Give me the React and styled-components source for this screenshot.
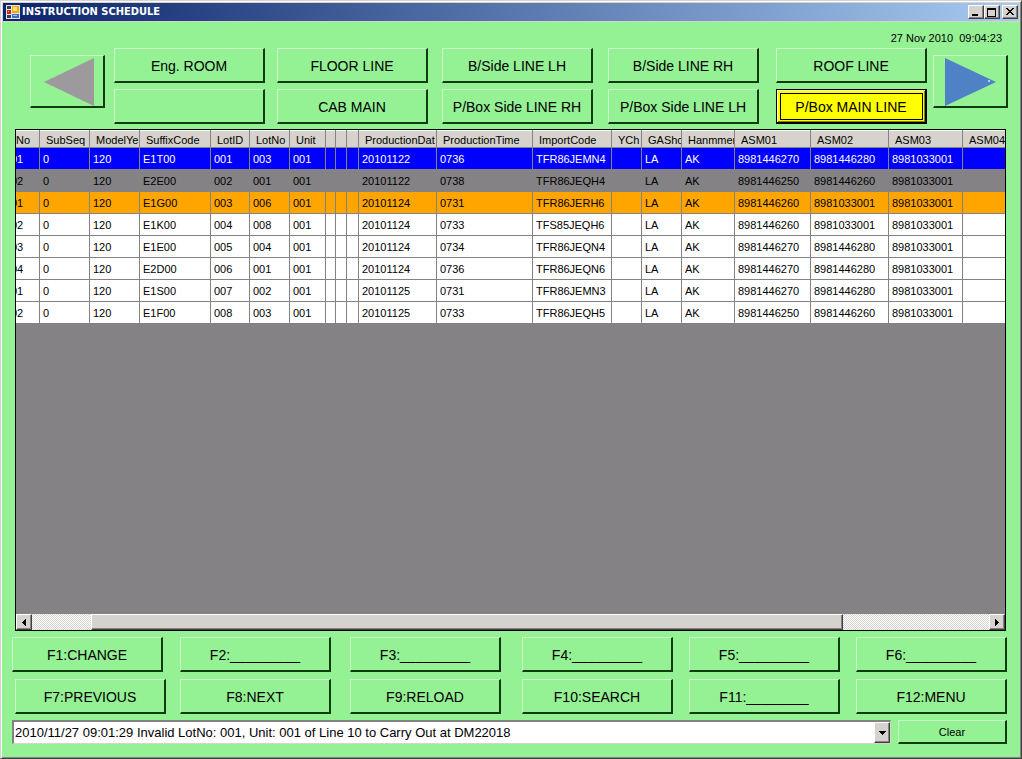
import React from "react";
import styled, { createGlobalStyle, css } from "styled-components";

const green = "#94f194";
const face = "#d6d3ce";
const grey = "#848284";

const GlobalStyle = createGlobalStyle`
  *, *::before, *::after { box-sizing: border-box; }
  body {
    margin: 0;
    background: ${face};
    color: #000;
    font: 11px/14px "Liberation Sans", Arial, sans-serif;
  }
  button, select { margin: 0; padding: 0; color: inherit; font: inherit; border-radius: 0; }
`;

const Window = styled.div`
  display: flex;
  flex-direction: column;
  min-height: 100vh;
  padding: 1px;
  background: ${face};
  border: 1px solid;
  border-color: ${face} #424142 #424142 ${face};
  box-shadow: inset 1px 1px 0 #fff, inset -1px -1px 0 ${grey};
`;

const TitleBar = styled.header`
  display: flex;
  align-items: center;
  height: 18px;
  margin: 1px 1px 1px;
  padding: 0 1px 0 3px;
  background: linear-gradient(90deg, #0a246a, #a6caf0);
`;

const Title = styled.h1`
  flex: 1;
  margin: 0 0 0 2px;
  color: #fff;
  font: bold 11px/16px "DejaVu Sans Condensed", "DejaVu Sans", sans-serif;
`;

const raised = css`
  border: 1px solid;
  border-color: #fff #424142 #424142 #fff;
  box-shadow: inset -1px -1px 0 ${grey};
  background: ${face};
`;

const CaptionButton = styled.button`
  ${raised}
  display: grid;
  place-items: center;
  width: 16px;
  height: 14px;
  margin-left: ${(p) => (p.$apart ? 2 : 0)}px;
`;

const Body = styled.main`
  flex: 1;
  display: flex;
  flex-direction: column;
  padding: 9px 12px 13px 10px;
  background: ${green};
`;

const Clock = styled.time`
  align-self: flex-end;
  margin-right: 6px;
  white-space: pre;
`;

const Navigation = styled.nav`
  display: flex;
  align-items: flex-start;
  gap: 6px;
  margin: 3px 0 5px 18px;
`;

const flatRaised = css`
  background: ${green};
  border: solid;
  border-width: 1px 2px 2px 1px;
  border-color: #c8ffc8 #103c10 #103c10 #c8ffc8;
`;

const ArrowButton = styled.button`
  ${flatRaised}
  display: grid;
  place-items: center;
  flex: none;
  width: 75px;
  height: 53px;
  margin-top: 7px;
`;

const ButtonGrid = styled.div`
  display: grid;
  flex: 1;
  grid-template-columns: ${(p) => p.$columns};
  row-gap: 6px;
  margin-left: ${(p) => p.$indent || 0}px;
`;

const PanelButton = styled.button`
  ${flatRaised}
  width: 151px;
  height: 35px;
  padding-top: 2px;
  font-size: 14px;
  line-height: 18px;
  white-space: nowrap;
  ${(p) =>
    p.$active &&
    css`
      background: #ff0;
      border: 1px solid #000;
      border-width: 1px 2px 2px 1px;
      box-shadow: inset 1px 1px 0 #ffffb0, inset -1px -1px 0 #848200;
      outline: 1px solid #000;
      outline-offset: -5px;
    `}
`;

const Grid = styled.section`
  display: flex;
  flex-direction: column;
  flex: 1;
  margin: 0 2px 6px 3px;
  overflow: hidden;
  background: ${grey};
  border: 1px solid #000;
`;

const Table = styled.table`
  width: 100%;
  table-layout: fixed;
  border-collapse: separate;
  border-spacing: 0;
`;

const Col = styled.col`
  width: ${(p) => (p.$width ? `${p.$width}px` : "auto")};
`;

const HeadCell = styled.th`
  height: 18px;
  padding: 2px 0 0 ${(p) => (p.$clipped ? 0 : 6)}px;
  background: ${face};
  border-right: 1px solid ${grey};
  border-bottom: 1px solid ${grey};
  box-shadow: inset 0 1px 0 #fff;
  font-weight: normal;
  text-align: left;
  &:last-child { border-right: 0; }
`;

const Cell = styled.td`
  height: 22px;
  padding: 0 0 0 ${(p) => (p.$clipped ? 0 : 3)}px;
  border-right: 1px solid ${grey};
  border-bottom: 1px solid ${grey};
  text-indent: ${(p) => (p.$clipped ? -5 : 0)}px;
  &:last-child { border-right: 0; }
`;

const CellText = styled.span`
  display: block;
  overflow: hidden;
  white-space: nowrap;
`;

const tones = {
  current: ["#00f", "#fff"],
  done: [grey, "#000"],
  next: ["#ffa500", "#000"],
  plain: ["#fff", "#000"],
};

const Row = styled.tr`
  background: ${(p) => tones[p.$tone][0]};
  color: ${(p) => tones[p.$tone][1]};
`;

const ScrollBar = styled.div`
  display: flex;
  height: 16px;
  margin-top: auto;
  background: repeating-conic-gradient(#fff 0 25%, ${face} 0 50%) 0 0 / 2px 2px;
`;

const ScrollButton = styled.button`
  ${raised}
  display: grid;
  place-items: center;
  flex: none;
  width: 16px;
`;

const ScrollSpace = styled.div`
  flex: ${(p) => p.$share} 0 0;
`;

const ScrollThumb = styled.div`
  ${raised}
  flex: 752 0 0;
`;

const FunctionKeys = styled.div`
  display: flex;
  flex-direction: column;
  gap: 7px;
  margin-right: 1px;
`;

const StatusRow = styled.div`
  display: flex;
  gap: 7px;
  margin: 6px 1px 0 0;
`;

const StatusField = styled.div`
  position: relative;
  flex: 1;
  height: 24px;
`;

const StatusSelect = styled.select`
  appearance: none;
  width: 100%;
  height: 24px;
  padding: 0 20px 0 1px;
  background: #fff;
  border: solid;
  border-width: 2px 1px 1px 2px;
  border-color: ${grey} ${face} ${face} ${grey};
  font-size: 13px;
  line-height: 20px;
`;

const DropMark = styled.span`
  ${raised}
  position: absolute;
  top: 2px;
  right: 1px;
  bottom: 1px;
  display: grid;
  place-items: center;
  width: 16px;
  pointer-events: none;
`;

const ClearButton = styled.button`
  ${flatRaised}
  width: 109px;
  height: 24px;
`;

const lines = [
  "Eng. ROOM", "FLOOR LINE", "B/Side LINE LH", "B/Side LINE RH", "ROOF LINE",
  "", "CAB MAIN", "P/Box Side LINE RH", "P/Box Side LINE LH", "P/Box MAIN LINE",
];

const columns = [
  ["No", 24], ["SubSeq", 50], ["ModelYe", 50], ["SuffixCode", 71], ["LotID", 39],
  ["LotNo", 40], ["Unit", 36], ["", 10], ["", 11], ["", 12], ["ProductionDat", 78],
  ["ProductionTime", 96], ["ImportCode", 79], ["YCh", 30], ["GASho", 40],
  ["Hanmmer", 53], ["ASM01", 76], ["ASM02", 78], ["ASM03", 74], ["ASM04", 0],
];

const order = (no, suffix, id, lot, date, time, code, asm1, asm2) => [
  no, "0", "120", suffix, id, lot, "001", "", "", "", date, time, code, "",
  "LA", "AK", asm1, asm2, "8981033001", "",
];

const rows = [
  ["current", order("01", "E1T00", "001", "003", "20101122", "0736", "TFR86JEMN4", "8981446270", "8981446280")],
  ["done", order("02", "E2E00", "002", "001", "20101122", "0738", "TFR86JEQH4", "8981446250", "8981446260")],
  ["next", order("01", "E1G00", "003", "006", "20101124", "0731", "TFR86JERH6", "8981446260", "8981033001")],
  ["plain", order("02", "E1K00", "004", "008", "20101124", "0733", "TFS85JEQH6", "8981446260", "8981033001")],
  ["plain", order("03", "E1E00", "005", "004", "20101124", "0734", "TFR86JEQN4", "8981446270", "8981446280")],
  ["plain", order("04", "E2D00", "006", "001", "20101124", "0736", "TFR86JEQN6", "8981446270", "8981446280")],
  ["plain", order("01", "E1S00", "007", "002", "20101125", "0731", "TFR86JEMN3", "8981446270", "8981446280")],
  ["plain", order("02", "E1F00", "008", "003", "20101125", "0733", "TFR86JEQH5", "8981446250", "8981446260")],
];

const keysTop = ["F1:CHANGE", "F2:_________", "F3:_________", "F4:_________", "F5:_________", "F6:_________"];
const keysBottom = ["F7:PREVIOUS", "F8:NEXT", "F9:RELOAD", "F10:SEARCH", "F11:________", "F12:MENU"];

function FormIcon() {
  return (
    <svg width="14" height="14" viewBox="0 0 14 14" aria-hidden="true">
      <rect width="14" height="14" fill="#e8e4d8" />
      <rect x="1" y="1" width="4" height="3" fill="#3c3c50" />
      <rect x="1" y="5" width="4" height="4" fill="#c42c20" />
      <rect x="2" y="6" width="1" height="1" fill="#ff9a88" />
      <rect x="1" y="10" width="4" height="3" fill="#3c3c50" />
      <rect x="6" y="1" width="7" height="7" fill="#e8a820" />
      <rect x="7" y="2" width="4" height="4" fill="#ffe070" />
      <rect x="6" y="9" width="7" height="4" fill="#3c6cc8" />
      <rect x="7" y="10" width="4" height="1" fill="#a0c4ff" />
    </svg>
  );
}

function Triangle({ points, width, height }) {
  return (
    <svg width={width} height={height} viewBox={`0 0 ${width} ${height}`} shapeRendering="crispEdges" aria-hidden="true">
      <polygon points={points} fill="#000" />
    </svg>
  );
}

export default function App() {
  return (
    <Window>
      <GlobalStyle />
      <TitleBar>
        <FormIcon />
        <Title>INSTRUCTION SCHEDULE</Title>
        <CaptionButton aria-label="Minimize">
          <svg width="10" height="9" shapeRendering="crispEdges"><rect x="1" y="6" width="6" height="2" /></svg>
        </CaptionButton>
        <CaptionButton aria-label="Maximize">
          <svg width="10" height="9" shapeRendering="crispEdges">
            <path d="M0 0h9v9h-9zM1 2v6h7v-6z" fillRule="evenodd" />
          </svg>
        </CaptionButton>
        <CaptionButton aria-label="Close" $apart>
          <svg width="10" height="8" shapeRendering="crispEdges">
            <path d="M1 0h2v1h1v1h2v-1h1v-1h2v1h-1v1h-1v1h-1v1h1v1h1v1h1v1h-2v-1h-1v-1h-2v1h-1v1h-2v-1h1v-1h1v-1h1v-1h-1v-1h-1v-1h-1z" />
          </svg>
        </CaptionButton>
      </TitleBar>
      <Body>
        <Clock dateTime="2010-11-27T09:04:23">27 Nov 2010  09:04:23</Clock>
        <Navigation aria-label="Lines">
          <ArrowButton aria-label="Previous lines">
            <svg width="72" height="50" aria-hidden="true"><path d="M13 26L63 2V50Z" fill="#9c9a9c" /></svg>
          </ArrowButton>
          <ButtonGrid $columns="163fr 165fr 166fr 168fr 151fr" $indent={3}>
            {lines.map((name, i) => (
              <PanelButton key={i} $active={i === 9} aria-label={name || "Unassigned line"}>{name}</PanelButton>
            ))}
          </ButtonGrid>
          <ArrowButton aria-label="Next lines">
            <svg width="72" height="50" aria-hidden="true">
              <path d="M11 2L62 26L11 50Z" fill="#4f81c7" />
              <rect x="54" y="24" width="2" height="2" fill="#b8d0f0" />
            </svg>
          </ArrowButton>
        </Navigation>
        <Grid>
          <Table>
            <colgroup>{columns.map(([, width], i) => <Col key={i} $width={width} />)}</colgroup>
            <thead>
              <tr>
                {columns.map(([name], i) => (
                  <HeadCell key={i} scope="col" $clipped={i === 0}><CellText>{name}</CellText></HeadCell>
                ))}
              </tr>
            </thead>
            <tbody>
              {rows.map(([tone, cells], r) => (
                <Row key={r} $tone={tone}>
                  {cells.map((text, i) => (
                    <Cell key={i} $clipped={i === 0}><CellText>{text}</CellText></Cell>
                  ))}
                </Row>
              ))}
            </tbody>
          </Table>
          <ScrollBar>
            <ScrollButton aria-label="Scroll left"><Triangle points="4,0 4,7 0,3.5" width={4} height={7} /></ScrollButton>
            <ScrollSpace $share={59} />
            <ScrollThumb />
            <ScrollSpace $share={146} />
            <ScrollButton aria-label="Scroll right"><Triangle points="0,0 0,7 4,3.5" width={4} height={7} /></ScrollButton>
          </ScrollBar>
        </Grid>
        <FunctionKeys>
          <ButtonGrid $columns="168fr 170fr 172fr 167fr 167fr 151fr">
            {keysTop.map((name) => <PanelButton key={name}>{name}</PanelButton>)}
          </ButtonGrid>
          <ButtonGrid $columns="165fr 170fr 172fr 167fr 167fr 151fr" $indent={3}>
            {keysBottom.map((name) => <PanelButton key={name}>{name}</PanelButton>)}
          </ButtonGrid>
        </FunctionKeys>
        <StatusRow>
          <StatusField>
            <StatusSelect aria-label="Messages">
              <option>2010/11/27 09:01:29 Invalid LotNo: 001, Unit: 001 of Line 10 to Carry Out at DM22018</option>
            </StatusSelect>
            <DropMark><Triangle points="0,0 7,0 3.5,4" width={7} height={4} /></DropMark>
          </StatusField>
          <ClearButton>Clear</ClearButton>
        </StatusRow>
      </Body>
    </Window>
  );
}
